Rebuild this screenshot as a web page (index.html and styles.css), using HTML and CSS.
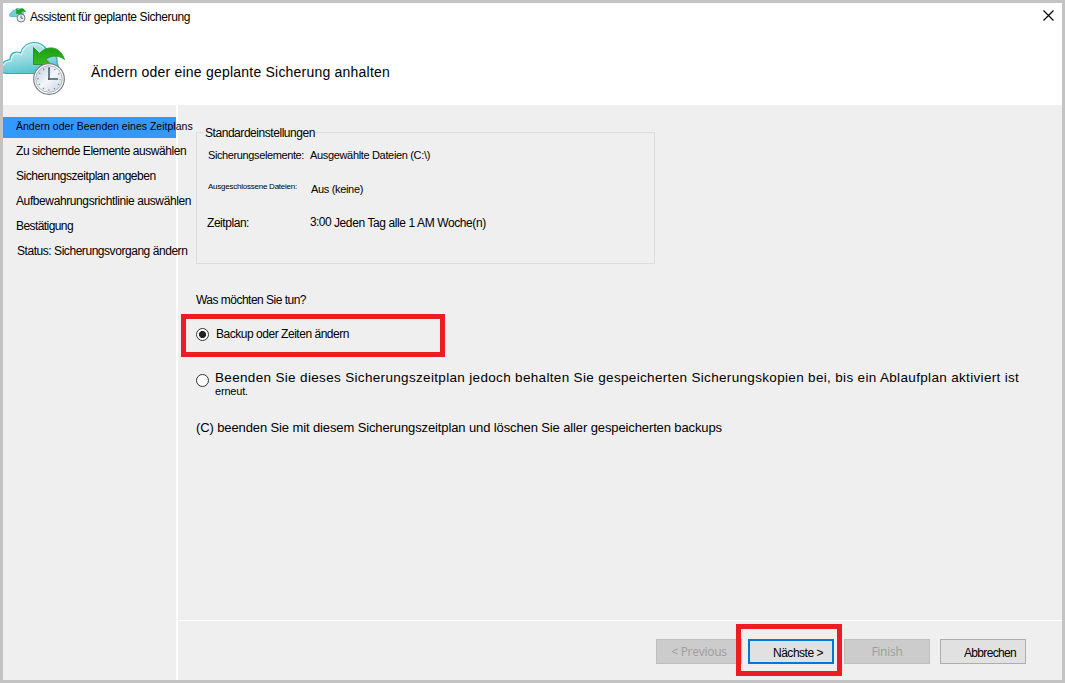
FILE: index.html
```html
<!DOCTYPE html>
<html lang="de">
<head>
<meta charset="utf-8">
<title>Assistent für geplante Sicherung</title>
<link rel="stylesheet" href="styles.css">
</head>
<body>
<svg class="defs" width="0" height="0">
  <defs>
    <linearGradient id="cloudFill" x1="0" y1="0" x2="0.3" y2="1">
      <stop offset="0" stop-color="#c6edef"/><stop offset="0.5" stop-color="#a2dee3"/><stop offset="1" stop-color="#5cc6d0"/>
    </linearGradient>
    <linearGradient id="arrowFill" x1="0" y1="0" x2="0" y2="1">
      <stop offset="0" stop-color="#1b9c14"/><stop offset="1" stop-color="#35bd22"/>
    </linearGradient>
    <linearGradient id="clockFace" x1="0" y1="0" x2="1" y2="1">
      <stop offset="0" stop-color="#b9cbdd"/><stop offset="0.5" stop-color="#f4f7fa"/><stop offset="1" stop-color="#c6d2de"/>
    </linearGradient>
  </defs>
</svg>
<div class="window">
  <header class="header">
    <div class="titlebar">
      <svg class="title-icon" viewBox="0 0 17 16">
        <path d="M1 9.500C0 7.500 1 5.500 3 5.500C3 3.500 4.500 2.800 6 3.300C7 0.800 11 0.800 12 3.500C15 4 15.500 8 13.500 9.500Z" fill="#74ced6" stroke="#4bb9c2" stroke-width="0.800"/>
        <path d="M7.500 2L9.500 3.500C11.500 0.500 15 0.700 16.500 5C14.500 3.800 13 4 12 5L13 6.500H7.500Z" fill="#20a51a" stroke="#168c12" stroke-width="0.500"/>
        <circle cx="12" cy="11" r="4" fill="#e9eef3" stroke="#777c82" stroke-width="1"/>
        <path d="M12 8.500V11.300H14" fill="none" stroke="#46586c" stroke-width="0.900"/>
      </svg>
      <span class="title">Assistent für geplante Sicherung</span>
      <svg class="close" viewBox="0 0 11 11"><path d="M0.500 0.500L10.500 10.500M10.500 0.500L0.500 10.500" stroke="#000" stroke-width="1.150"/></svg>
    </div>
    <div class="banner">
      <svg class="banner-icon" viewBox="0 0 64 56">
        <path d="M-1 31V23C1 20 4 19 7 18.500C7 12 12.500 9.500 17.500 12C19.500 5 25 1.500 31 1.500C37 1.500 42 5 44 9.500C51 10.500 55 16 54 22C57 27 54 32.500 48 32.500H5C2.500 32.500 0.500 32 -1 31Z" fill="url(#cloudFill)" stroke="#2eafb7" stroke-width="1.200"/>
        <path d="M0 24.500C2 21 5 20 8.300 20C8 13.500 13 11 18.300 13.800C20.500 6.500 25 3 31 3C35 3 38 4.500 40 6.500" fill="none" stroke="#def6f6" stroke-width="1.100"/>
        <path d="M30.500 6.500L36.500 12.500C44 4 57 4.500 61.500 18.500C55 13.500 47 14.500 43 18.500L48 23.500H30.500Z" fill="url(#arrowFill)" stroke="#168c12" stroke-width="0.800"/>
        <circle cx="46" cy="38" r="15.300" fill="#fff" stroke="#797d82" stroke-width="1.200"/>
        <circle cx="46" cy="38" r="13.300" fill="url(#clockFace)" stroke="#a9b1ba" stroke-width="0.900"/>
        <circle cx="46" cy="38" r="11" fill="none" stroke="#71808f" stroke-width="1.600" stroke-dasharray="1 4.760" stroke-dashoffset="0.500"/>
        <path d="M46 26.500V39M45 38H55" fill="none" stroke="#46586c" stroke-width="1.500"/>
      </svg>
      <h1 class="heading">Ändern oder eine geplante Sicherung anhalten</h1>
    </div>
  </header>
  <div class="content">
    <nav class="steps">
      <div class="step active">Ändern oder Beenden eines Zeitplans</div>
      <div class="step">Zu sichernde Elemente auswählen</div>
      <div class="step">Sicherungszeitplan angeben</div>
      <div class="step wide">Aufbewahrungsrichtlinie auswählen</div>
      <div class="step narrow">Bestätigung</div>
      <div class="step indent">Status: Sicherungsvorgang ändern</div>
    </nav>
    <main class="main">
      <div class="page">
        <section class="group">
          <div class="legend">Standardeinstellungen</div>
          <div class="row items"><span class="label">Sicherungselemente:</span><span class="value">Ausgewählte Dateien (C:\)</span></div>
          <div class="row excluded"><span class="label">Ausgeschlossene Dateien:</span><span class="value">Aus (keine)</span></div>
          <div class="row schedule"><span class="label">Zeitplan:</span><span class="value"><span class="time">3:00</span><span>Jeden Tag alle 1 AM Woche(n)</span></span></div>
        </section>
        <div class="question">Was möchten Sie tun?</div>
        <div class="option change"><span class="radio checked"></span><span>Backup oder Zeiten ändern</span></div>
        <div class="option stop"><span class="radio"></span>
          <div><div class="stop-text">Beenden Sie dieses Sicherungszeitplan jedoch behalten Sie gespeicherten Sicherungskopien bei, bis ein Ablaufplan aktiviert ist</div><div class="again">erneut.</div></div>
        </div>
        <div class="delete-text">(C) beenden Sie mit diesem Sicherungszeitplan und löschen Sie aller gespeicherten backups</div>
      </div>
      <footer class="footer">
        <div class="button disabled previous">&lt; Previous</div>
        <div class="button primary">Nächste &gt;</div>
        <div class="button disabled finish">Finish</div>
        <div class="button cancel">Abbrechen</div>
      </footer>
    </main>
  </div>
</div>
</body>
</html>
```
FILE: styles.css
```css
* { box-sizing: border-box; }
body { margin: 0; font: 12px/20px "Liberation Sans", Arial, sans-serif; color: #000; white-space: nowrap; }
.defs { position: absolute; }
.window { width: 1065px; height: 683px; border: 3px solid #c3c3c3; background: #efefef; display: flex; flex-direction: column; overflow: hidden; }
.header { height: 102px; background: #fff; }
.titlebar { height: 28px; display: flex; align-items: flex-start; padding: 4px 8px 0 6px; }
.title-icon { width: 17px; height: 16px; }
.title { margin-left: 4px; letter-spacing: -0.4px; }
.close { width: 11px; height: 11px; margin: 3px 0 0 auto; }
.banner { display: flex; padding-top: 10px; }
.banner-icon { width: 64px; height: 56px; }
.heading { margin: 21px 0 0 24px; font-size: 14px; font-weight: 400; letter-spacing: 0.215px; }
.content { flex: 1; display: flex; min-height: 0; }
.steps { width: 175px; padding-top: 12px; border-right: 2px solid #fff; }
.step { height: 25px; padding: 3px 0 0 13px; line-height: 20px; letter-spacing: -0.45px; }
.step.active { height: 21px; padding: 0 0 0 13px; background: #3399ff; font-size: 10.5px; line-height: 19px; letter-spacing: 0.01px; }
.step.wide { letter-spacing: -0.397px; }
.step.narrow { letter-spacing: -0.58px; }
.step.indent { padding-left: 14px; }
.main { flex: 1; min-width: 0; display: flex; flex-direction: column; }
.page { flex: 1; padding: 27px 0 0 18px; }
.group { width: 459px; height: 132px; border: 1px solid #dcdcdc; padding-left: 11px; }
.legend { width: max-content; margin: -10px 0 2px -5px; padding-left: 2px; background: #efefef; letter-spacing: -0.449px; }
.row { display: grid; grid-template-columns: 102px 1fr; height: 34px; }
.items { font-size: 11px; letter-spacing: -0.386px; }
.items .value { letter-spacing: -0.336px; }
.excluded { font-size: 11px; letter-spacing: -0.33px; }
.excluded .label { font-size: 8px; line-height: 15px; letter-spacing: -0.24px; }
.excluded .value { padding-left: 1px; }
.schedule .label { margin-left: -1px; letter-spacing: -0.447px; }
.schedule .value { display: flex; gap: 3px; letter-spacing: -0.4px; }
.time { line-height: 18px; letter-spacing: -0.589px; }
.question { margin-top: 26px; letter-spacing: -0.514px; }
.option { display: flex; }
.radio { width: 13px; height: 13px; flex: none; border: 1px solid #333; border-radius: 50%; background: #fff; }
.checked { background: radial-gradient(circle, #222 0 3.2px, #fff 3.9px); }
.change { width: 264px; height: 43px; margin: 4px 0 0 -15px; padding: 5px 0 0 10px; border: 5px solid #ed1c24; letter-spacing: -0.47px; }
.change .radio { margin: 4px 7px 0 0; }
.stop { margin-top: 12px; }
.stop .radio { margin: 5px 6px 0 0; }
.stop-text { font-size: 13.5px; line-height: 17px; letter-spacing: 0.331px; }
.again { font-size: 11px; line-height: 10px; height: 11px; letter-spacing: -0.178px; }
.delete-text { margin-top: 21px; font-size: 13px; letter-spacing: -0.115px; }
.footer { height: 60px; border-top: 1px solid #fff; padding: 18px 36px 0 0; display: flex; justify-content: flex-end; align-items: flex-start; }
.button { position: relative; width: 86px; height: 25px; margin-left: 10px; border: 1px solid #adadad; background: #e1e1e1; text-align: right; line-height: 26px; }
.disabled { border-color: #bfbfbf; background: #ccc; color: #9c9c9c; text-align: center; font-family: "Open Sans", sans-serif; font-size: 12px; line-height: 24px; letter-spacing: -0.25px; }
.primary { margin-left: 6px; border: 2px solid #0078d7; line-height: 24px; padding-right: 9px; letter-spacing: -0.485px; }
.primary::after { content: ""; position: absolute; inset: -17px -10px -14px -14px; border: 5px solid #ed1c24; }
.cancel { padding-right: 9px; letter-spacing: -0.671px; }
```
